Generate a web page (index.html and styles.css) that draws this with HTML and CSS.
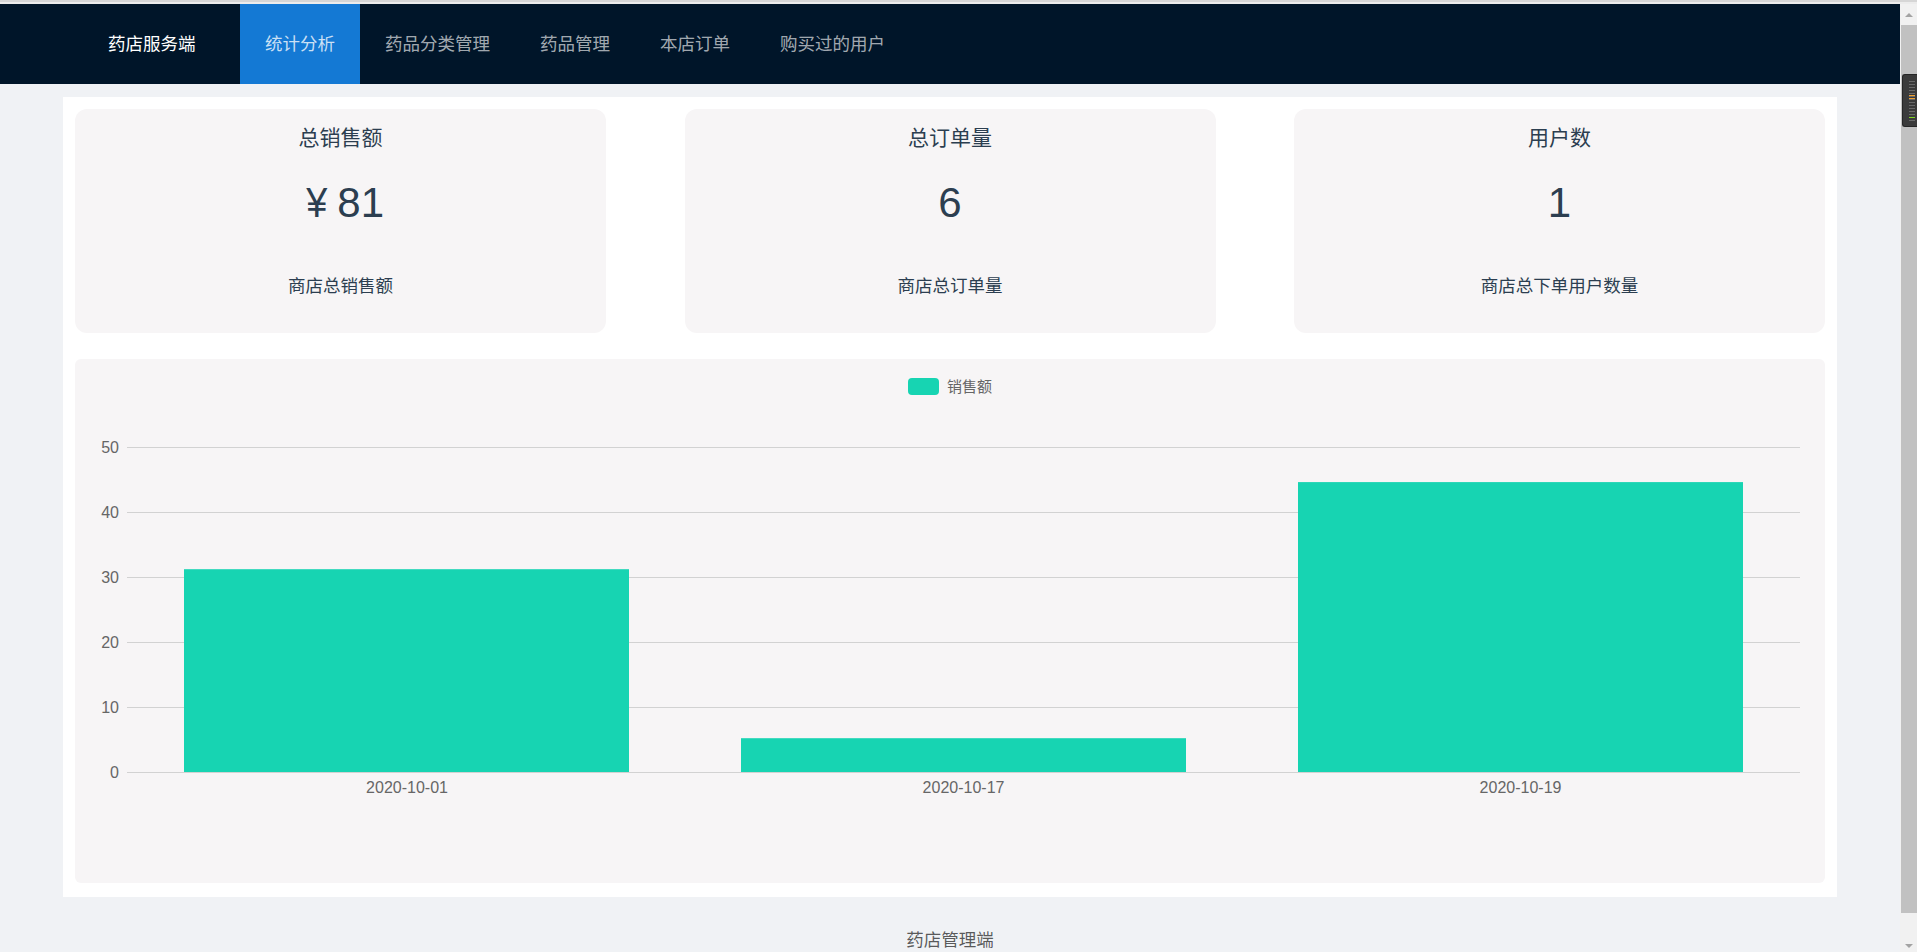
FILE: index.html
```html
<!DOCTYPE html>
<html lang="zh-CN">
<head>
<meta charset="utf-8">
<title>药店服务端 - 统计分析</title>
<link rel="stylesheet" href="styles.css">
</head>
<body>
<div class="topline"></div>
<div class="frame">
  <div class="page">
    <header class="nav">
      <div class="logo">药店服务端</div>
      <ul class="menu">
        <li class="item active">统计分析</li>
        <li class="item">药品分类管理</li>
        <li class="item">药品管理</li>
        <li class="item">本店订单</li>
        <li class="item">购买过的用户</li>
      </ul>
    </header>
    <main class="content">
      <div class="board">
        <div class="stats">
          <div class="card">
            <div class="card-title">总销售额</div>
            <div class="card-value"><span class="yen">¥</span>81</div>
            <div class="card-desc">商店总销售额</div>
          </div>
          <div class="card">
            <div class="card-title">总订单量</div>
            <div class="card-value">6</div>
            <div class="card-desc">商店总订单量</div>
          </div>
          <div class="card">
            <div class="card-title">用户数</div>
            <div class="card-value">1</div>
            <div class="card-desc">商店总下单用户数量</div>
          </div>
        </div>
        <div class="chart-panel">
          <svg class="chart" width="1750" height="524" viewBox="0 0 1750 524">
            <g class="legend">
              <rect x="833" y="19" width="31" height="17" rx="4" class="bar"/>
              <text x="872" y="33" class="legend-text">销售额</text>
            </g>
            <g class="grid">
              <line x1="52" y1="88.5" x2="1725" y2="88.5"/>
              <line x1="52" y1="153.5" x2="1725" y2="153.5"/>
              <line x1="52" y1="218.5" x2="1725" y2="218.5"/>
              <line x1="52" y1="283.5" x2="1725" y2="283.5"/>
              <line x1="52" y1="348.5" x2="1725" y2="348.5"/>
              <line x1="52" y1="413.5" x2="1725" y2="413.5"/>
            </g>
            <g class="ylabels">
              <text x="44" y="94">50</text>
              <text x="44" y="159">40</text>
              <text x="44" y="224">30</text>
              <text x="44" y="289">20</text>
              <text x="44" y="354">10</text>
              <text x="44" y="419">0</text>
            </g>
            <g class="bars">
              <rect class="bar" x="109" y="210.2" width="445" height="202.8"/>
              <rect class="bar" x="666" y="379.2" width="445" height="33.8"/>
              <rect class="bar" x="1223" y="123.1" width="445" height="289.9"/>
            </g>
            <g class="xlabels">
              <text x="332" y="434">2020-10-01</text>
              <text x="888.5" y="434">2020-10-17</text>
              <text x="1445.5" y="434">2020-10-19</text>
            </g>
          </svg>
        </div>
      </div>
    </main>
    <footer class="footer">药店管理端</footer>
  </div>
  <div class="scrollbar">
    <div class="sb-arrow"><span class="tri-up"></span></div>
    <div class="sb-thumb">
      <div class="widget"><div class="widget-lines"></div></div>
    </div>
    <div class="sb-bottom"><span class="tri-down"></span></div>
  </div>
</div>
</body>
</html>
```

FILE: styles.css
```css
html, body {
  margin: 0;
  height: 100%;
  overflow: hidden;
}

body {
  font-family: "Liberation Sans", "Noto Sans CJK SC", sans-serif;
  background: #f0f2f5;
}

.topline {
  height: 2px;
  background: #d6d6d6;
  border-bottom: 2px solid #ececec;
}

.frame {
  display: flex;
  height: 948px;
}

.page {
  flex: 1;
  min-width: 0;
  overflow: hidden;
  background: #f0f2f5;
}

/* navigation */
.nav {
  height: 80px;
  background: #001529;
  display: flex;
  padding-left: 108px;
}

.logo {
  width: 132px;
  color: #ffffff;
  font-size: 17.5px;
  line-height: 80px;
}

.menu {
  display: flex;
  list-style: none;
  margin: 0;
  padding: 0;
}

.item {
  padding: 0 25px;
  font-size: 17.5px;
  line-height: 80px;
  color: rgba(255, 255, 255, 0.65);
}

.item.active {
  background: #1479d4;
  color: rgba(255, 255, 255, 0.78);
}

/* content */
.content {
  padding: 13px 63px 0;
}

.board {
  background: #ffffff;
  padding: 12px 12px 14px;
}

.stats {
  display: flex;
  justify-content: space-between;
}

.card {
  width: 531px;
  height: 224px;
  box-sizing: border-box;
  padding-top: 15px;
  background: #f7f5f6;
  border-radius: 12px;
  text-align: center;
  color: #2c3e50;
}

.card-title {
  font-size: 21px;
  line-height: 28px;
}

.card-value {
  margin-top: 26px;
  font-size: 42px;
  line-height: 50px;
}

.yen {
  display: inline-block;
  transform: scaleX(0.9);
  margin-left: 8px;
  margin-right: 9px;
}

.card-desc {
  margin-top: 46px;
  font-size: 17.5px;
  line-height: 25px;
}

.chart-panel {
  margin-top: 26px;
  height: 524px;
  background: #f7f5f6;
  border-radius: 6px;
}

.chart {
  display: block;
}

.chart .bar {
  fill: #17d4b2;
}

.chart .grid line {
  stroke: #d2d2d2;
  stroke-width: 1;
}

.chart text {
  font-family: "Liberation Sans", "Noto Sans CJK SC", sans-serif;
  fill: #666666;
}

.chart .legend-text {
  font-size: 15px;
}

.chart .ylabels text {
  font-size: 16px;
  text-anchor: end;
}

.chart .xlabels text {
  font-size: 16px;
  text-anchor: middle;
}

.footer {
  padding: 30px 63px;
  text-align: center;
  font-size: 17.5px;
  line-height: 26px;
  color: rgba(0, 0, 0, 0.65);
}

/* scrollbar */
.scrollbar {
  width: 17px;
  background: #f1f1f1;
  display: flex;
  flex-direction: column;
}

.sb-arrow {
  height: 21px;
  display: flex;
  align-items: center;
  justify-content: center;
}

.tri-up {
  width: 0;
  height: 0;
  border-left: 4px solid transparent;
  border-right: 4px solid transparent;
  border-bottom: 4px solid #a3a3a3;
}

.sb-thumb {
  height: 888px;
  margin-left: 1px;
  background: #c1c1c1;
  overflow: hidden;
}

.widget {
  margin-top: 49px;
  margin-left: 1px;
  height: 53px;
  background: #3b3b3b;
  border: 1px solid #262626;
  border-right: none;
  border-radius: 3px 0 0 3px;
  box-sizing: border-box;
  padding: 6px 0 0 6px;
}

.widget-lines {
  width: 6px;
  height: 40px;
  background:
    linear-gradient(to bottom, transparent 0 14px, #f0a030 14px 15px, transparent 15px 17px, #f0a030 17px 18px, transparent 18px 36px, #7ed321 36px 37px, transparent 37px),
    repeating-linear-gradient(to bottom, #6a6a6a 0 1px, transparent 1px 3px);
}

.sb-bottom {
  flex: 1;
  display: flex;
  align-items: flex-end;
  justify-content: center;
  padding-bottom: 4px;
}

.tri-down {
  width: 0;
  height: 0;
  border-left: 4px solid transparent;
  border-right: 4px solid transparent;
  border-top: 4px solid #a3a3a3;
}
```
